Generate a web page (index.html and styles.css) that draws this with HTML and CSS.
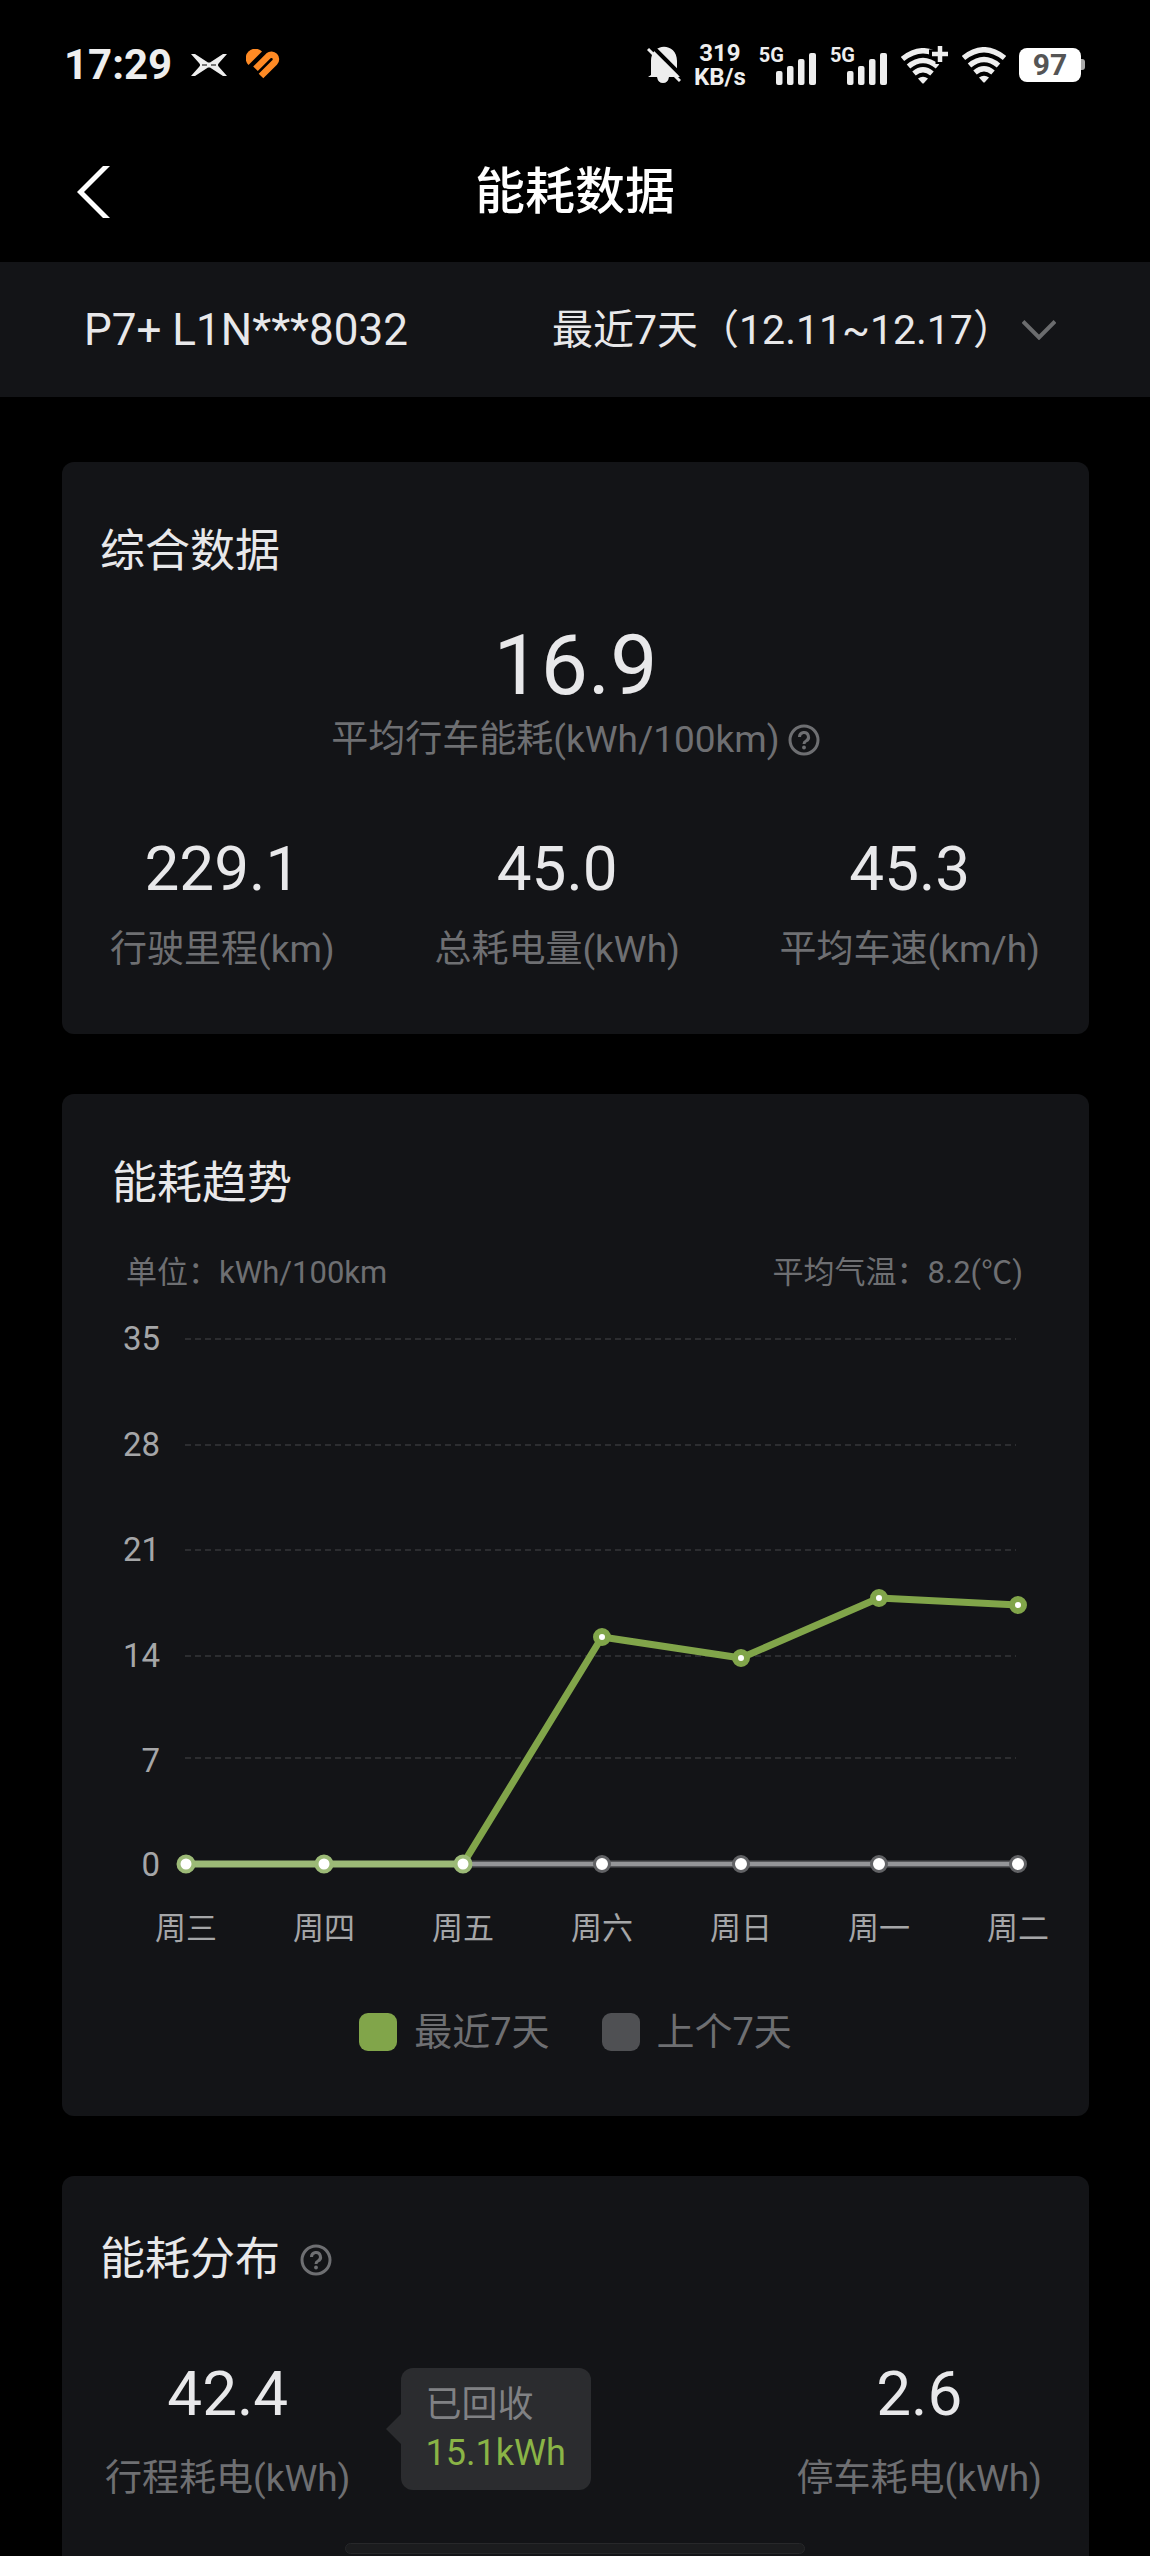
FILE: index.html
```html
<!DOCTYPE html>
<html lang="zh-CN">
<head>
<meta charset="utf-8">
<meta name="viewport" content="width=device-width, initial-scale=1">
<title>能耗数据</title>
<link rel="stylesheet" href="styles.css">
</head>
<body>
<svg class="defs" aria-hidden="true">
  <symbol id="help" viewBox="0 0 32 32">
    <circle cx="16" cy="16" r="14" fill="none" stroke="currentColor" stroke-width="3"/>
    <path d="M11.500 13a4.500 4.500 0 1 1 6.500 4q-2 1-2 3" fill="none" stroke="currentColor" stroke-width="3"/>
    <circle cx="16" cy="23.500" r="1.900" fill="currentColor"/>
  </symbol>
  <symbol id="bars" viewBox="0 0 41 32">
    <rect x="0" y="18" width="6.500" height="14" rx="2"/>
    <rect x="11" y="13" width="6.500" height="19" rx="2"/>
    <rect x="22" y="6" width="6.500" height="26" rx="2"/>
    <rect x="33" y="0" width="7" height="32" rx="2"/>
  </symbol>
  <symbol id="wifi" viewBox="0 0 44 36">
    <g fill="none" stroke="currentColor" stroke-width="5.400">
      <path d="M1.500 11Q22-5.500 42.500 11"/>
      <path d="M7.500 18.500Q22 6.500 36.500 18.500"/>
      <path d="M13 25.500Q22 18 31 25.500"/>
    </g>
    <path d="M17 30.500q5-3.500 10 0l-4 4.500q-1 1-2 0z" fill="currentColor"/>
  </symbol>
</svg>

<div class="screen">
  <div class="status">
    <div class="status-left">
      <time class="clock">17:29</time>
      <svg class="brand" viewBox="0 0 36 22"><path d="M0 0H4L17 8.500H19L32 0H36L28 9Q26 11 28 13L36 22H32L19 13.500H17L4 22H0L8 13Q10 11 8 9Z" fill="#eee"/><path d="M0 4.500 9 11 0 17.500ZM36 4.500 27 11 36 17.500Z" fill="#000"/><path d="M11 11H16M20 11H25" stroke="#000"/></svg>
      <svg class="heart" viewBox="0 0 36 32"><path d="M9.500 19.800 22.500 6.800A4.500 4.500 0 0 1 28.800 13.200L15 27" stroke="#ff8a24" stroke-width="6.500" fill="none"/><path d="M2.500 16A8.500 8.500 0 0 1 16 2.500Z" fill="#ff8a24"/></svg>
    </div>
    <div class="status-right">
      <svg class="bell" viewBox="0 0 34 38"><path d="M4 29V15C4-4 30-4 30 15v12l3 4H22q-1 6-6 6t-6-6H1z" fill="#eee"/><path d="M4-1 36 31" stroke="#000" stroke-width="4"/><path d="M1 3 33 35" stroke="#eee" stroke-width="3"/></svg>
      <div class="speed"><span>319</span><span>KB/s</span></div>
      <div class="signal"><span>5G</span><svg class="bars"><use href="#bars"/></svg></div>
      <div class="signal"><span>5G</span><svg class="bars"><use href="#bars"/></svg></div>
      <svg class="wifi-plus" viewBox="0 0 48 38"><use href="#wifi" y="2" width="44" height="36"/><path d="M39-2V18M28 8H48" stroke="#000" stroke-width="9"/><path d="M39 0V16M31 8H47" stroke="#eee" stroke-width="4.500"/></svg>
      <svg class="wifi"><use href="#wifi"/></svg>
      <div class="battery">97</div>
    </div>
  </div>

  <header class="nav">
    <button class="back" type="button" aria-label="返回"><svg viewBox="0 0 34 52"><path d="M26 0H33L7 26 33 52H26L0 26Z" fill="#fff"/></svg></button>
    <h1>能耗数据</h1>
  </header>

  <div class="filter">
    <span>P7+ L1N***8032</span>
    <div class="range">
      <select aria-label="时间范围"><option>最近7天（12.11~12.17）</option></select>
      <svg viewBox="0 0 34 20"><path d="M1 1.500 17 17.500 33 1.500" fill="none" stroke="#6b6c6e" stroke-width="4"/></svg>
    </div>
  </div>

  <main>
    <section class="card">
      <h2>综合数据</h2>
      <div class="hero">
        <strong>16.9</strong>
        <span class="label">平均行车能耗(kWh/100km)<button class="help" type="button" aria-label="说明"><svg><use href="#help"/></svg></button></span>
      </div>
      <div class="stats">
        <div class="stat"><strong>229.1</strong><span class="label">行驶里程(km)</span></div>
        <div class="stat"><strong>45.0</strong><span class="label">总耗电量(kWh)</span></div>
        <div class="stat"><strong>45.3</strong><span class="label">平均车速(km/h)</span></div>
      </div>
    </section>

    <section class="card trend">
      <h2>能耗趋势</h2>
      <div class="meta"><span>单位：kWh/100km</span><span>平均气温：8.2(℃)</span></div>
      <svg class="chart" viewBox="0 0 1027 670" role="img" aria-label="能耗趋势">
        <g class="grid">
          <path d="M123 47H954"/><path d="M123 153H954"/><path d="M123 258H954"/><path d="M123 364H954"/><path d="M123 466H954"/>
        </g>
        <g class="y-axis">
          <text x="98" y="58">35</text><text x="98" y="164">28</text><text x="98" y="269">21</text>
          <text x="98" y="375">14</text><text x="98" y="480">7</text><text x="98" y="584">0</text>
        </g>
        <path class="line-prev-edge" d="M402 572H956"/>
        <path class="line-prev" d="M402 572H956"/>
        <g class="dot-prev">
          <circle cx="540" cy="572" r="7.500"/><circle cx="679" cy="572" r="7.500"/><circle cx="817" cy="572" r="7.500"/><circle cx="956" cy="572" r="7.500"/>
        </g>
        <path class="line-now" d="M401 572 540 345 679 366 817 306 956 313"/>
        <path class="line-both" d="M124 572H401"/>
        <g class="dot-now">
          <circle cx="540" cy="345" r="6"/><circle cx="679" cy="366" r="6"/><circle cx="817" cy="306" r="6"/><circle cx="956" cy="313" r="6"/>
        </g>
        <g class="dot-both">
          <circle cx="124" cy="572" r="7.500"/><circle cx="262" cy="572" r="7.500"/><circle cx="401" cy="572" r="7.500"/>
        </g>
        <g class="x-axis">
          <text x="124" y="647">周三</text><text x="262" y="647">周四</text><text x="401" y="647">周五</text><text x="540" y="647">周六</text>
          <text x="679" y="647">周日</text><text x="817" y="647">周一</text><text x="956" y="647">周二</text>
        </g>
      </svg>
      <ul class="legend">
        <li><i class="swatch now"></i>最近7天</li>
        <li><i class="swatch prev"></i>上个7天</li>
      </ul>
    </section>

    <section class="card split">
      <h2>能耗分布<button class="help" type="button" aria-label="说明"><svg><use href="#help"/></svg></button></h2>
      <div class="parts">
        <div class="stat"><strong>42.4</strong><span class="label">行程耗电(kWh)</span></div>
        <div class="bubble"><span>已回收</span><b>15.1kWh</b></div>
        <div class="stat last"><strong>2.6</strong><span class="label">停车耗电(kWh)</span></div>
      </div>
    </section>
  </main>
  <div class="home-bar"></div>
</div>
</body>
</html>
```
FILE: styles.css
```css
* { box-sizing: border-box; margin: 0; padding: 0; }
body {
  background: #000;
  color: #e8e8ea;
  font-family: Roboto, "Noto Sans CJK SC", sans-serif;
}
button { background: none; border: 0; color: inherit; cursor: pointer; }
ul { list-style: none; }
svg { display: block; flex: none; }
.defs { position: absolute; width: 0; height: 0; }
.screen { display: flex; flex-direction: column; min-height: 100vh; }

/* status bar */
.status {
  display: flex;
  align-items: center;
  justify-content: space-between;
  height: 122px;
  padding: 8px 69px 0 64px;
  color: #eee;
}
.status-left, .status-right { display: flex; align-items: center; }
.status-left { gap: 19px; }
.clock { font-size: 42px; font-weight: 700; line-height: 48px; }
.brand { width: 36px; height: 22px; }
.heart { width: 36px; height: 32px; }
.status-right { gap: 13px; font-weight: 700; }
.bell { width: 34px; height: 38px; }
.speed { display: flex; flex-direction: column; align-items: center; font-size: 24px; line-height: 24px; }
.signal { display: flex; height: 40px; font-size: 20px; line-height: 20px; }
.signal span { margin-right: -8px; }
.bars { width: 41px; height: 32px; align-self: flex-end; fill: #eee; }
.wifi-plus { width: 48px; height: 38px; }
.wifi { width: 44px; height: 36px; }
.battery {
  position: relative;
  width: 62px;
  height: 34px;
  border-radius: 8px;
  background: #fff;
  color: #555;
  font-size: 30px;
  line-height: 34px;
  text-align: center;
}
.battery::after {
  content: "";
  position: absolute;
  left: 100%;
  top: 11px;
  width: 4px;
  height: 11px;
  border-radius: 0 3px 3px 0;
  background: #aaa;
}

/* title bar */
.nav {
  display: grid;
  grid-template-columns: 1fr auto 1fr;
  align-items: center;
  height: 140px;
  padding: 0 77px;
}
.back { justify-self: start; }
.back svg { width: 34px; height: 52px; }
.nav h1 { color: #fff; font-size: 50px; font-weight: 500; line-height: 60px; }

.filter {
  display: flex;
  align-items: center;
  justify-content: space-between;
  height: 135px;
  padding: 0 94px 0 84px;
  background: #131417;
  font-size: 44px;
}
.range { position: relative; font-size: 41px; }
.range select {
  appearance: none;
  border: 0;
  padding-right: 42px;
  background: none;
  color: inherit;
  font: inherit;
}
.range svg {
  position: absolute;
  right: 0;
  top: 0;
  bottom: 0;
  width: 34px;
  height: 20px;
  margin: auto 0;
  pointer-events: none;
}

/* cards */
main { display: flex; flex: 1; flex-direction: column; gap: 60px; padding: 65px 61px 0 62px; }
.card { padding: 62px 0 60px; border-radius: 12px; background: #131417; }
.card h2 {
  display: flex;
  align-items: center;
  gap: 20px;
  padding-left: 38px;
  font-size: 45px;
  font-weight: 400;
  line-height: 56px;
}
.label { color: #6e6f72; font-size: 37px; line-height: 48px; }
.help { color: #6e6f72; }
.help svg { width: 32px; height: 32px; }
strong { font-weight: 400; }
.hero { display: flex; flex-direction: column; align-items: center; margin-top: 36px; }
.hero strong { font-size: 84px; line-height: 100px; }
.hero .label { display: flex; align-items: center; gap: 8px; }
.stats { display: flex; justify-content: space-between; margin-top: 75px; padding: 0 49px 0 48px; }
.stat { display: flex; flex-direction: column; align-items: center; gap: 27px; }
.stat strong { font-size: 62px; line-height: 60px; }

/* trend chart */
.trend h2 { padding-left: 50px; }
.meta {
  display: flex;
  justify-content: space-between;
  margin-top: 42px;
  padding: 0 66px 0 64px;
  color: #6e6f72;
  font-size: 31px;
  line-height: 38px;
}
.chart { width: 100%; height: auto; }
.grid { stroke: #2c2d30; stroke-width: 2; stroke-dasharray: 6 4; }
.y-axis { fill: #a5a6a8; font-size: 33px; text-anchor: end; }
.x-axis { fill: #a5a6a8; font-size: 31px; text-anchor: middle; }
.chart path { fill: none; }
.line-prev-edge { stroke: #56575a; stroke-width: 7; }
.line-prev { stroke: #949598; stroke-width: 4; }
.line-now { stroke: #81a54a; stroke-width: 7; stroke-linejoin: round; }
.line-both { stroke: #9cba77; stroke-width: 7; }
.dot-prev { fill: #fff; stroke: #616265; stroke-width: 3; }
.dot-now { fill: #fff; stroke: #81a54a; stroke-width: 6; }
.dot-both { fill: #fff; stroke: #9cba77; stroke-width: 4; }
.legend {
  display: flex;
  justify-content: center;
  gap: 52px;
  margin-top: 46px;
  color: #6e6f72;
  font-size: 38px;
  line-height: 48px;
}
.legend li { display: flex; align-items: center; gap: 17px; }
.swatch { width: 38px; height: 38px; border-radius: 9px; }
.swatch.now { background: #81a54a; }
.swatch.prev { background: #4f5053; }

/* distribution */
.split { flex: 1; padding-top: 56px; border-radius: 12px 12px 0 0; }
.split .stat { gap: 31px; }
.parts { display: flex; align-items: flex-start; gap: 50px; margin-top: 76px; padding: 0 47px 0 43px; }
.parts .last { margin-left: auto; }
.bubble {
  position: relative;
  display: flex;
  flex-direction: column;
  justify-content: center;
  height: 122px;
  margin-top: 4px;
  padding: 0 25px;
  border-radius: 12px;
  background: #2b2c2f;
  color: #808184;
  font-size: 36px;
  line-height: 48px;
}
.bubble b { color: #8ab446; font-weight: 400; }
.bubble::before {
  content: "";
  position: absolute;
  right: 100%;
  top: 46px;
  border: 15px solid transparent;
  border-left-width: 0;
  border-right-color: #2b2c2f;
}
.home-bar {
  position: fixed;
  left: 30%;
  right: 30%;
  bottom: 2px;
  height: 11px;
  border: 1px solid #27282a;
  border-radius: 6px;
  background: #1b1c1e;
}
```
